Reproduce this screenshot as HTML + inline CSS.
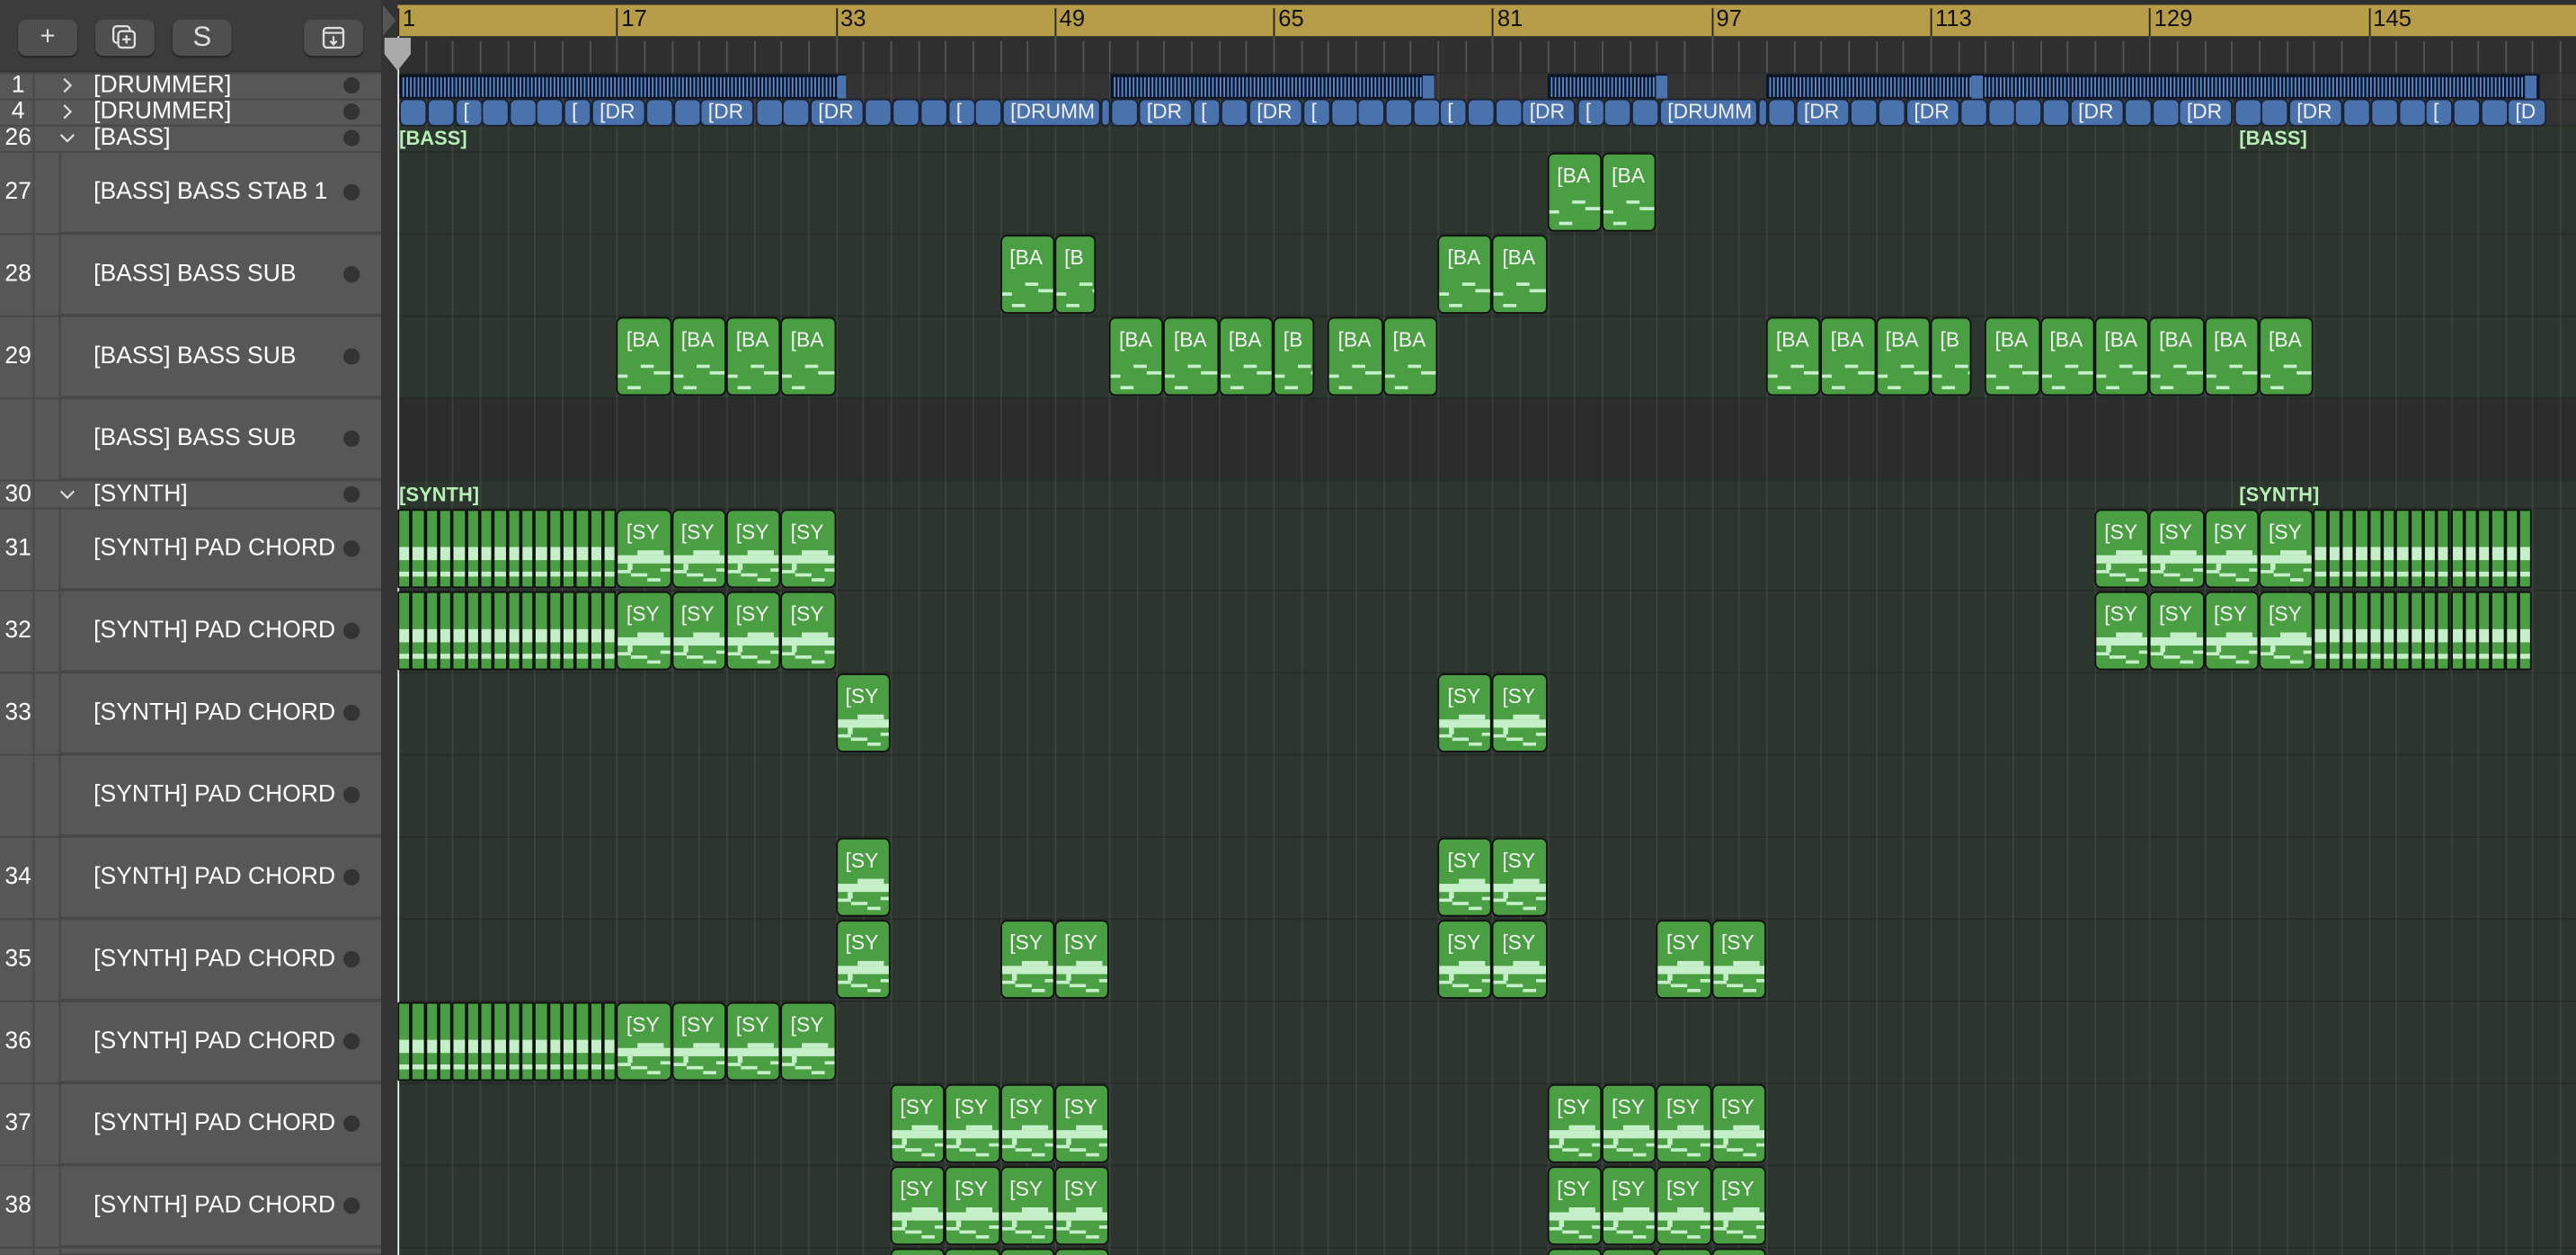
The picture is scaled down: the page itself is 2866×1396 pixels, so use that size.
<!DOCTYPE html>
<html><head><meta charset="utf-8">
<style>
html,body{margin:0;padding:0;background:#2c2c2c;overflow:hidden;width:2866px;height:1396px}
#o{position:absolute;left:0;top:0;width:2866px;height:1396px;overflow:hidden}
#w{position:absolute;left:0;top:0;width:1568px;height:764px;transform:scale(1.82781,1.82723);transform-origin:0 0;font-family:"Liberation Sans",sans-serif;overflow:hidden;background:#2d362f}
.a{position:absolute;box-sizing:border-box}
.btn{background:#4f4f4f;border-radius:5px;top:12px;height:22px;width:36px;color:#ddd;text-align:center;font-size:16px;line-height:22px;box-shadow:0 1px 1px #222}
.num{color:#fff;font-size:14.5px;width:22px;text-align:center}
.nm{color:#fff;font-size:14.5px;white-space:nowrap}
.dot{width:10px;height:10px;border-radius:50%;background:#333}
.c{background:#4b9f43;border:1px solid #111;border-radius:4px;overflow:hidden}
.c .t{position:absolute;left:5px;top:6px;font-size:12.5px;white-space:nowrap;color:#f4f4f4}
.n{position:absolute;background:#c5efc9}
.d{background:#4a72ad;border:1px solid #1a2233;border-radius:4px;color:#eee;font-size:12.5px;line-height:15px;padding-left:4px;white-space:nowrap;overflow:hidden}
</style></head><body><div id="o"><div id="w">
<div class="a" style="left:0;top:0;width:242px;height:44px;background:#3c3c3c;border-bottom:1px solid #333"></div>
<div class="a btn" style="left:11px">+</div>
<div class="a btn" style="left:58px"><svg width="20" height="18" viewBox="0 0 20 18" style="margin-top:2px"><rect x="3" y="2" width="10" height="10" rx="2" fill="none" stroke="#ddd" stroke-width="1.3"/><rect x="6" y="5" width="10" height="10" rx="2" fill="#4f4f4f" stroke="#ddd" stroke-width="1.3"/><path d="M11 7.5v5M8.5 10h5" stroke="#ddd" stroke-width="1.3"/></svg></div>
<div class="a btn" style="left:105px;font-size:17px">S</div>
<div class="a btn" style="left:185px"><svg width="18" height="18" viewBox="0 0 18 18" style="margin-top:2px"><rect x="3" y="3" width="12" height="12" rx="2" fill="none" stroke="#ddd" stroke-width="1.3"/><path d="M3 6h12M9 8v5M7 11l2 2 2-2" fill="none" stroke="#ddd" stroke-width="1.2"/></svg></div>
<div class="a" style="left:0;top:44px;width:232px;height:720px;background:#575757"></div>
<div class="a" style="left:232px;top:0;width:10px;height:764px;background:#333"></div>
<div id="left"></div>
<div class="a" style="left:242px;top:0;width:1326px;height:44px;background:#2f2f2f"></div>
<div class="a" style="left:242px;top:3px;width:1326px;height:19px;background:#b89d48"></div>
<div id="ruler"></div>
<div id="grid"></div>
<div class="a" style="left:242px;top:22px;width:1px;height:742px;background:#eee"></div>
<svg class="a" style="left:233px;top:22px" width="18" height="22"><path d="M1 1h16v10l-8 10-8-10z" fill="#aaa"/></svg>
<svg class="a" style="left:233px;top:3px" width="9" height="19"><path d="M0 0l8 9.5-8 9.5z" fill="#555"/></svg>
<div id="clips"></div>
</div></div>
<script>
const X=b=>242+(b-1)*8.33, BW=8.33;
const rows=[[44,16,'1','[DRUMMER]','g','>'],[60,16,'4','[DRUMMER]','g','>'],[76,16,'26','[BASS]','g','v'],
[92,50,'27','[BASS] BASS STAB 1','t'],[142,50,'28','[BASS] BASS SUB','t'],[192,50,'29','[BASS] BASS SUB','t'],[242,50,'','[BASS] BASS SUB','t'],
[292,17,'30','[SYNTH]','g','v'],[309,50,'31','[SYNTH] PAD CHORD','t'],[359,50,'32','[SYNTH] PAD CHORD','t'],[409,50,'33','[SYNTH] PAD CHORD','t'],
[459,50,'','[SYNTH] PAD CHORD','t'],[509,50,'34','[SYNTH] PAD CHORD','t'],[559,50,'35','[SYNTH] PAD CHORD','t'],[609,50,'36','[SYNTH] PAD CHORD','t'],
[659,50,'37','[SYNTH] PAD CHORD','t'],[709,50,'38','[SYNTH] PAD CHORD','t'],[759,5,'','','t']];
let L='',G='';
rows.forEach(r=>{const[t,hh,n,nm,ty,ar]=r;
 L+=`<div class="a" style="left:0;top:${t}px;width:232px;height:${hh}px;border-top:1px solid #474747"></div>`;
 L+=`<div class="a" style="left:20px;top:${t}px;width:1px;height:${hh}px;background:#484848"></div>`;
 if(ty=='t'){L+=`<div class="a" style="left:36px;top:${t}px;width:196px;height:${hh}px;border-left:1px solid #454545;border-bottom:1px solid #474747"></div>`;}
 L+=`<div class="a num" style="left:0;top:${t+hh/2-8}px">${n}</div>`;
 if(ar) L+=`<svg class="a" style="left:36px;top:${t+hh/2-5}px" width="10" height="10">${ar=='>'?'<path d="M3 1l4 4-4 4" fill="none" stroke="#ddd" stroke-width="1.2"/>':'<path d="M1 3l4 4 4-4" fill="none" stroke="#ddd" stroke-width="1.2"/>'}</svg>`;
 L+=`<div class="a nm" style="left:57px;top:${t+hh/2-8}px">${nm}</div>`;
 if(nm) L+=`<div class="a dot" style="left:209px;top:${t+hh/2-5}px"></div>`;
 let bg = (t<76)?'#333':(t==242?'#2c2c2c':'#2c352e');
 G+=`<div class="a" style="left:243px;top:${t}px;width:1325px;height:${hh}px;background:${bg};border-top:1px solid ${t<76?'#2a2a2a':'#262b27'}"></div>`;
});
document.getElementById('left').innerHTML=L;
for(let b=1;b<=160;b+=2){const x=X(b);G+=`<div class="a" style="left:${x}px;top:44px;width:1px;height:720px;background:rgba(255,255,255,0.08)"></div>`;}
document.getElementById('grid').innerHTML=G;
let R='';
for(let b=1;b<=160;b+=16){const x=X(b);R+=`<div class="a" style="left:${x}px;top:5px;width:1px;height:17px;background:#222"></div><div class="a" style="left:${x+3}px;top:3px;font-size:14px;color:#111">${b}</div>`;}
for(let b=3;b<=160;b+=2){if((b-1)%16)R+=`<div class="a" style="left:${X(b)}px;top:25px;width:1px;height:19px;background:#555"></div>`;else R+=`<div class="a" style="left:${X(b)}px;top:22px;width:1px;height:22px;background:#555"></div>`}
document.getElementById('ruler').innerHTML=R;
let C='';
function bass(b,y,w,l){w=w||4;l=l||'[BA';C+=`<div class="a c" style="left:${X(b)}px;top:${y+1}px;width:${w*BW}px;height:48px"><span class="t">${l}</span><span class="n" style="left:14px;top:28px;width:8px;height:2px"></span><span class="n" style="left:22px;top:32px;width:10px;height:2px"></span><span class="n" style="left:0;top:34px;width:6px;height:2px"></span><span class="n" style="left:6px;top:41px;width:8px;height:2px"></span></div>`;}
function syn(b,y){C+=`<div class="a c" style="left:${X(b)}px;top:${y+1}px;width:${4*BW}px;height:48px"><span class="t">[SY</span><span class="n" style="left:0;top:27px;width:33px;height:5px"></span><span class="n" style="left:12px;top:24px;width:16px;height:3px"></span><span class="n" style="left:6px;top:32px;width:3px;height:4px"></span><span class="n" style="left:0;top:36px;width:8px;height:2px"></span><span class="n" style="left:8px;top:38px;width:10px;height:2px"></span><span class="n" style="left:18px;top:41px;width:8px;height:2px"></span><span class="n" style="left:26px;top:35px;width:7px;height:2px"></span></div>`;}
function thin(b,y){C+=`<div class="a c" style="left:${X(b)}px;top:${y+1}px;width:${BW}px;height:48px;border-radius:1px"><span class="n" style="left:0;top:22px;width:8px;height:8px"></span><span class="n" style="left:0;top:37px;width:8px;height:3px"></span></div>`;}
[85,89].forEach(b=>bass(b,92));
[45,77,81].forEach(b=>bass(b,142));bass(49,142,3,'[B');
[17,21,25,29,53,57,61,69,73,101,105,109,117,121,125,129,133,137].forEach(b=>bass(b,192));
bass(65,192,3,'[B');bass(113,192,3,'[B');
[309,359].forEach(y=>{for(let b=1;b<17;b++)thin(b,y);[17,21,25,29,125,129,133,137].forEach(b=>syn(b,y));for(let b=141;b<157;b++)thin(b,y);});
[33,77,81].forEach(b=>{syn(b,409);syn(b,509)});
[33,45,49,77,81,93,97].forEach(b=>syn(b,559));
for(let b=1;b<17;b++)thin(b,609);[17,21,25,29].forEach(b=>syn(b,609));
[659,709,759].forEach(y=>[37,41,45,49,85,89,93,97].forEach(b=>syn(b,y)));
C+=`<div class="a" style="left:243px;top:77px;font-size:12px;font-weight:bold;color:#b6f0b4">[BASS]</div><div class="a" style="left:1363px;top:77px;font-size:12px;font-weight:bold;color:#b6f0b4">[BASS]</div>`;
C+=`<div class="a" style="left:243px;top:294px;font-size:12px;font-weight:bold;color:#b6f0b4">[SYNTH]</div><div class="a" style="left:1363px;top:294px;font-size:12px;font-weight:bold;color:#b6f0b4">[SYNTH]</div>`;
[[243,515,[510]],[676,873,[866]],[942,1015,[1008]],[1075,1546,[1200,1537]]].forEach(([a,b,s])=>{
 let st='';for(let x=a+2;x<b-4;x+=2.3){st+=`<rect x="${(x-a).toFixed(1)}" y="2" width="1" height="12" fill="#5d8bd0"/>`;}
 s.forEach(q=>st+=`<rect x="${q-a}" y="1" width="7" height="14" fill="#4a72ad"/>`);
 C+=`<svg class="a" style="left:${a}px;top:45px" width="${b-a}" height="15"><rect width="${b-a}" height="15" fill="#0c1526"/>${st}</svg>`;
});
const dr=[[243,''],[260,''],[277,'['],[293,''],[310,''],[326,''],[343,'['],[360,'[DR',33],[393,''],[410,''],[426,'[DR',33],[460,''],[476,''],[493,'[DR',33],[526,''],[543,''],[560,''],[577,'['],[593,''],[610,'[DRUMM',60],[670,'',5],[676,''],[693,'[DR',33],[726,'['],[743,''],[760,'[DR',33],[793,'['],[810,''],[826,''],[843,''],[860,''],[876,'['],[893,''],[910,''],[926,'[DR',33],[960,'['],[976,''],[993,''],[1010,'[DRUMM',60],[1070,'',5],[1076,''],[1093,'[DR',33],[1126,''],[1143,''],[1160,'[DR',33],[1193,''],[1210,''],[1226,''],[1243,''],[1260,'[DR',33],[1293,''],[1310,''],[1326,'[DR',33],[1360,''],[1376,''],[1393,'[DR',33],[1426,''],[1443,''],[1460,''],[1476,'['],[1493,''],[1510,''],[1526,'[D',24]];
dr.forEach(([x,l,w])=>{w=w||16.6;C+=`<div class="a d" style="left:${x}px;top:60px;width:${w}px;height:17px">${l}</div>`});
document.getElementById('clips').innerHTML=C;
</script>
</body></html>
